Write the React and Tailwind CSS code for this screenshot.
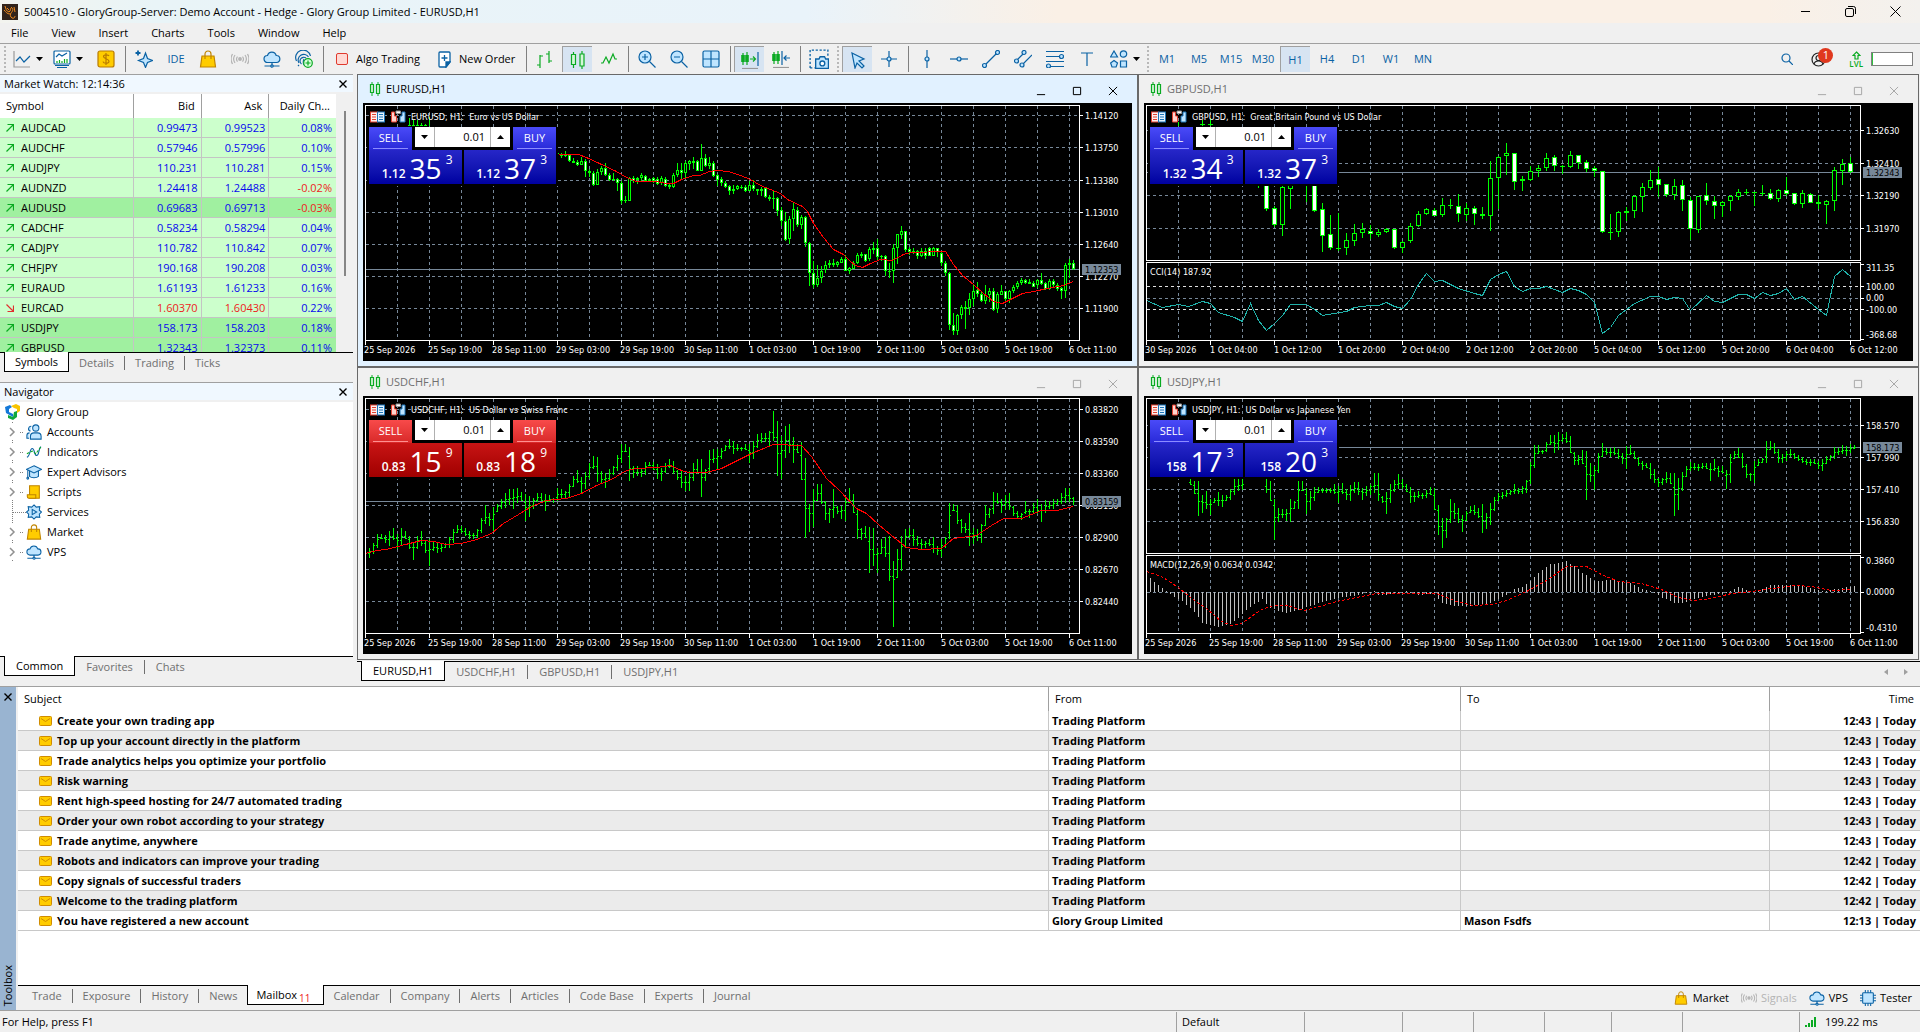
import React from 'react';

const BLUE = '#0b62a4';
const SKY = '#bfe5ff';
const GREEN = '#0aaa22';

/* ---------- data ---------- */

const MENU = ['File', 'View', 'Insert', 'Charts', 'Tools', 'Window', 'Help'];
const TIMEFRAMES = ['M1', 'M5', 'M15', 'M30', 'H1', 'H4', 'D1', 'W1', 'MN'];

const QUOTES = [
  { symbol: 'AUDCAD', bid: '0.99473', ask: '0.99523', change: '0.08%' },
  { symbol: 'AUDCHF', bid: '0.57946', ask: '0.57996', change: '0.10%' },
  { symbol: 'AUDJPY', bid: '110.231', ask: '110.281', change: '0.15%' },
  { symbol: 'AUDNZD', bid: '1.24418', ask: '1.24488', change: '-0.02%' },
  { symbol: 'AUDUSD', bid: '0.69683', ask: '0.69713', change: '-0.03%', hot: true },
  { symbol: 'CADCHF', bid: '0.58234', ask: '0.58294', change: '0.04%' },
  { symbol: 'CADJPY', bid: '110.782', ask: '110.842', change: '0.07%' },
  { symbol: 'CHFJPY', bid: '190.168', ask: '190.208', change: '0.03%' },
  { symbol: 'EURAUD', bid: '1.61193', ask: '1.61233', change: '0.16%' },
  { symbol: 'EURCAD', bid: '1.60370', ask: '1.60430', change: '0.22%', down: true },
  { symbol: 'USDJPY', bid: '158.173', ask: '158.203', change: '0.18%', hot: true },
  { symbol: 'GBPUSD', bid: '1.32343', ask: '1.32373', change: '0.11%', hot: true },
];

const MAILS = [
  ['Create your own trading app', 'Trading Platform', '', '12:43 | Today'],
  ['Top up your account directly in the platform', 'Trading Platform', '', '12:43 | Today'],
  ['Trade analytics helps you optimize your portfolio', 'Trading Platform', '', '12:43 | Today'],
  ['Risk warning', 'Trading Platform', '', '12:43 | Today'],
  ['Rent high-speed hosting for 24/7 automated trading', 'Trading Platform', '', '12:43 | Today'],
  ['Order your own robot according to your strategy', 'Trading Platform', '', '12:43 | Today'],
  ['Trade anytime, anywhere', 'Trading Platform', '', '12:43 | Today'],
  ['Robots and indicators can improve your trading', 'Trading Platform', '', '12:42 | Today'],
  ['Copy signals of successful traders', 'Trading Platform', '', '12:42 | Today'],
  ['Welcome to the trading platform', 'Trading Platform', '', '12:42 | Today'],
  ['You have registered a new account', 'Glory Group Limited', 'Mason Fsdfs', '12:13 | Today'],
];

// Series are kept in thirds of a pixel, top down. Candles: high, low, open, close.
const EURUSD = [
  [234,248,240,238],[236,252,246,240],[232,248,241,246],[240,264,243,262],[252,268,262,266],[258,276,264,272],[250,274,272,262],[256,310,261,290],
  [284,308,290,298],[290,335,296,332],[284,334,332,294],[276,304,294,282],[266,306,282,304],[296,320,303,317],[298,322,314,318],[312,350,315,326],
  [320,390,326,382],[366,386,378,382],[308,382,380,312],[306,328,312,320],[308,330,318,312],[298,320,312,304],[302,324,306,322],[312,324,314,320],
  [310,326,312,320],[308,334,314,330],[306,334,328,312],[308,340,314,336],[326,344,332,338],[298,342,338,304],[268,308,304,288],[266,316,288,298],
  [260,312,298,268],[258,288,270,262],[250,284,268,262],[258,292,262,290],[210,292,290,252],[240,280,252,276],[250,284,276,266],[260,310,266,305],
  [300,335,304,318],[310,336,316,328],[322,342,328,338],[334,362,336,350],[334,360,352,344],[332,348,344,336],[332,344,338,342],[334,354,338,350],
  [322,352,350,334],[318,350,334,346],[344,362,346,352],[340,366,352,344],[340,372,343,370],[362,380,370,375],[350,405,372,376],[368,425,373,410],
  [398,455,408,442],[415,500,442,497],[425,510,496,436],[388,470,436,406],[400,460,408,454],[424,466,454,428],[426,518,428,508],[505,636,508,598],
  [560,642,598,632],[574,640,632,612],[576,628,612,590],[562,598,588,574],[558,582,573,566],[554,580,566,574],[562,580,574,564],[550,568,566,554],
  [544,592,554,590],[580,600,590,583],[562,586,584,566],[538,570,566,544],[534,552,546,540],[540,564,541,560],[518,562,556,526],[504,540,528,522],
  [496,562,522,548],[542,562,546,550],[544,606,546,590],[566,612,590,593],[510,628,592,522],[480,570,522,481],[456,494,482,472],[470,534,472,527],
  [520,544,524,534],[522,540,536,530],[528,556,532,545],[522,550,545,530],[522,554,530,545],[518,546,521,545],[518,546,545,522],[522,550,523,535],
  [530,575,538,566],[562,606,566,598],[594,768,598,754],[716,782,754,770],[720,782,770,724],[694,734,724,700],[682,764,700,704],[658,724,702,676],
  [632,696,676,650],[624,670,648,660],[652,684,660,680],[632,690,680,664],[642,684,664,652],[642,712,652,707],[654,716,706,660],[634,664,662,650],
  [650,680,652,674],[648,686,674,652],[634,656,652,640],[622,644,640,628],[612,634,628,618],[616,630,619,626],[614,630,624,630],[620,640,628,638],
  [614,642,634,618],[598,632,618,630],[624,648,628,644],[614,648,644,620],[614,640,620,634],[626,652,632,644],[640,674,642,652],[566,672,652,574],
  [556,612,574,568],[558,588,568,586],
];

const EURUSD_MA = [
  [195,240],[215,241],[223,250],[236,268],[253,290],[263,310],[273,320],[293,322],[303,328],[310,328],[318,314],[330,304],[336,302],[346,292],
  [353,288],[365,290],[377,304],[387,316],[397,332],[417,358],[424,375],[439,396],[444,410],[450,448],[460,490],[470,524],[480,540],[487,562],
  [492,573],[499,578],[507,568],[517,556],[529,558],[540,540],[547,535],[582,532],[590,570],[599,604],[610,630],[620,656],[630,680],[639,688],
  [647,676],[659,658],[670,652],[684,642],[700,634],[710,620],
];

const GBPUSD = [
  [318,342,320,330],[330,410,330,404],[395,460,402,452],[336,486,452,340],[330,405,344,330],[300,330,320,310],[310,384,315,330],[330,413,330,410],
  [387,534,405,486],[423,528,481,523],[418,530,524,521],[477,543,523,499],[450,515,500,478],[447,492,478,466],[452,494,472,479],[466,490,482,475],
  [462,478,475,466],[464,526,466,523],[500,537,523,505],[447,508,502,457],[410,460,457,421],[402,424,421,406],[402,426,408,425],[372,428,424,394],
  [374,404,394,397],[360,444,397,419],[388,440,422,402],[396,453,402,421],[398,436,421,425],[262,470,425,311],[246,406,311,250],[207,302,247,238],
  [236,348,238,323],[305,350,322,314],[276,320,317,292],[272,308,290,283],[238,290,283,252],[244,290,250,276],[272,299,276,280],[231,282,278,244],
  [243,284,244,266],[258,294,265,284],[276,310,283,292],[291,476,292,475],[420,498,474,477],[412,490,475,415],[398,440,416,412],[364,432,412,367],
  [328,413,370,340],[288,348,343,319],[280,370,316,334],[330,368,331,364],[314,378,364,336],[318,410,334,379],[370,497,378,464],[366,476,467,367],
  [327,393,364,382],[366,435,382,395],[382,430,395,385],[364,411,382,367],[346,378,370,355],[344,362,353,358],[353,395,354,357],[334,365,356,359],
  [344,378,358,374],[346,384,376,349],[309,366,348,359],[356,394,358,391],[348,402,391,358],[357,388,361,386],[364,404,384,391],[378,450,392,382],
  [280,411,382,289],[256,333,290,270],[249,298,268,295],
];

const CCI = [
  [2,679],[18,700],[34,691],[44,695],[58,682],[66,687],[74,714],[90,730],[98,742],[106,686],[114,738],[122,767],[130,748],[138,722],[146,690],
  [162,690],[170,704],[178,724],[202,712],[210,700],[226,692],[234,692],[242,685],[250,697],[258,701],[266,676],[274,630],[282,598],[290,622],
  [298,619],[314,641],[330,658],[338,662],[346,616],[354,599],[362,591],[370,635],[378,650],[386,643],[394,643],[402,636],[418,653],[426,643],
  [434,649],[442,661],[450,683],[458,778],[466,760],[474,724],[490,688],[506,667],[514,667],[522,676],[530,670],[538,673],[546,707],[562,662],
  [570,682],[578,685],[594,661],[602,661],[610,671],[618,653],[626,662],[634,656],[642,641],[650,676],[658,667],[674,704],[682,724],[690,607],
  [698,586],[706,607],
];

// Bars: high, low
const USDCHF = [
  [545,575],[530,564],[505,545],[505,518],[508,530],[495,540],[486,522],[505,550],[487,540],[495,520],[510,550],[530,582],[510,548],[495,540],
  [525,560],[520,600],[525,556],[530,562],[535,558],[532,546],[513,545],[488,530],[478,500],[480,502],[487,510],[495,518],[500,518],[490,515],
  [457,500],[418,475],[440,480],[422,495],[415,438],[400,428],[382,425],[370,418],[370,430],[365,412],[378,405],[385,465],[390,452],[395,430],
  [380,408],[382,405],[385,435],[386,408],[395,410],[366,405],[370,395],[375,395],[354,392],[330,362],[312,350],[332,380],[318,370],[290,340],
  [270,308],[272,348],[315,350],[320,365],[308,345],[300,328],[268,316],[235,290],[234,258],[244,346],[300,336],[300,330],[305,334],[288,328],
  [288,300],[288,312],[295,338],[305,346],[290,320],[280,306],[285,325],[312,342],[315,365],[330,376],[315,376],[290,345],[278,325],[280,392],
  [308,346],[252,322],[250,290],[250,308],[245,280],[237,255],[219,250],[225,265],[235,254],[243,256],[235,252],[235,290],[225,280],[205,245],
  [202,230],[200,228],[195,240],[135,225],[165,330],[210,340],[180,275],[174,262],[213,290],[235,262],[228,342],[275,515],[415,498],[368,482],
  [354,405],[354,415],[404,462],[425,470],[370,455],[420,445],[420,458],[390,465],[366,412],[385,440],[430,520],[485,522],[480,515],[484,620],
  [486,600],[545,620],[518,565],[512,572],[510,645],[585,782],[550,635],[510,615],[490,545],[487,515],[490,540],[510,540],[520,548],[524,545],
  [520,540],[512,560],[540,568],[520,574],[512,545],[412,520],[415,435],[418,475],[460,500],[470,500],[440,540],[485,535],[490,525],[475,530],
  [418,480],[425,455],[378,445],[382,415],[400,440],[388,432],[380,432],[420,450],[435,460],[440,462],[405,445],[430,455],[410,440],[400,445],
  [415,468],[402,440],[405,430],[400,430],[400,418],[382,415],[366,410],[366,408],[392,418],
];

const USDCHF_MA = [
  [2,562],[13,551],[23,548],[38,536],[58,523],[70,526],[83,535],[98,532],[113,520],[128,500],[140,470],[155,445],[168,420],[183,403],[203,395],
  [218,380],[233,358],[248,338],[263,312],[273,306],[293,302],[307,298],[318,312],[325,319],[343,319],[358,306],[368,292],[388,262],[410,235],
  [438,236],[448,270],[463,335],[475,370],[493,425],[503,440],[515,475],[528,508],[543,542],[558,549],[578,546],[590,515],[613,507],[628,478],
  [640,457],[658,455],[678,432],[693,432],[710,421],
];

const USDJPY = [
  [339,358],[345,385],[345,449],[388,440],[375,430],[400,446],[395,410],[378,420],[388,424],[388,405],[370,403],[338,388],[338,375],[338,371],
  null,null,null,null,null,[340,380],[345,405],[400,522],[425,468],[430,455],[430,465],[398,468],[405,430],[345,428],[345,375],[365,445],[375,432],
  [362,405],[362,380],[366,380],[366,380],[366,380],[355,385],[360,410],[350,385],[368,403],[358,405],[348,380],[348,388],[365,402],[360,390],
  [355,388],[322,380],[322,406],[390,412],[378,444],[355,410],[342,378],[323,370],[340,368],[355,378],[362,412],[378,408],[374,395],[380,398],
  [372,395],[364,388],[366,432],[416,508],[455,546],[455,515],[400,470],[412,458],[425,470],[448,498],[435,465],[420,440],[418,448],[425,455],
  [415,500],[440,488],[410,478],[392,434],[380,405],[378,400],[372,394],[372,388],[355,385],[365,385],[360,384],[342,380],[288,355],[238,305],
  [238,265],[252,264],[228,258],[208,238],[208,260],[198,252],[205,228],[198,232],[210,262],[258,298],[268,298],[252,295],[255,402],[290,348],
  [300,372],[260,320],[232,272],[245,268],[245,274],[242,268],[248,280],[260,294],[240,310],[238,268],[255,280],[272,300],[285,312],[290,305],
  [290,340],[310,352],[335,362],[335,358],[318,350],[320,354],[322,450],[335,432],[318,375],[300,332],[288,315],[292,312],[295,315],[292,308],
  [290,308],[292,345],[280,315],[300,332],[300,322],[312,370],[265,350],[255,280],[245,275],[262,305],[295,335],[320,345],[285,350],[280,300],
  [275,292],[225,290],[225,252],[230,265],[250,292],[265,292],[255,285],[248,272],[260,280],[268,285],[272,290],[278,298],[280,300],[278,295],
  [285,310],[280,314],[270,295],[268,284],[242,280],[245,268],[236,265],[240,270],[235,262],[238,250],
];

const MACD = [
  [6,637],[14,656],[22,675],[26,685],[38,705],[50,738],[58,770],[74,783],[86,775],[94,755],[106,722],[118,700],[126,725],[142,742],[154,733],
  [166,720],[178,708],[194,695],[210,690],[230,676],[234,688],[250,684],[262,676],[274,686],[290,684],[298,712],[306,718],[322,720],[346,712],
  [362,688],[370,668],[378,662],[386,645],[394,620],[406,595],[422,585],[430,600],[438,620],[450,645],[470,642],[486,652],[498,668],[510,680],
  [518,695],[530,710],[538,710],[550,700],[562,690],[582,682],[594,664],[606,674],[614,674],[626,658],[642,656],[658,660],[678,676],[690,670],
  [702,664],[710,660],
];

const MACD_SIGNAL = [
  [2,616],[17,630],[34,664],[47,695],[62,725],[77,765],[87,776],[97,770],[117,730],[129,716],[142,718],[159,731],[172,724],[192,706],[212,692],
  [232,682],[262,682],[292,682],[312,704],[329,716],[347,715],[362,702],[382,676],[402,642],[422,600],[442,600],[457,625],[474,646],[497,650],
  [517,670],[534,692],[549,702],[567,695],[587,682],[607,676],[627,666],[652,657],[667,659],[687,671],[707,668],
];

const DATES_H1 = [
  '25 Sep 2026', '25 Sep 19:00', '28 Sep 11:00', '29 Sep 03:00', '29 Sep 19:00', '30 Sep 11:00',
  '1 Oct 03:00', '1 Oct 19:00', '2 Oct 11:00', '5 Oct 03:00', '5 Oct 19:00', '6 Oct 11:00',
];
const DATES_GBP = [
  '30 Sep 2026', '1 Oct 04:00', '1 Oct 12:00', '1 Oct 20:00', '2 Oct 04:00', '2 Oct 12:00',
  '2 Oct 20:00', '5 Oct 04:00', '5 Oct 12:00', '5 Oct 20:00', '6 Oct 04:00', '6 Oct 12:00',
];

/* ---------- chart parts ---------- */

const px = (v, off) => Math.round(v / 3 - off);

const Candles = ({ data, start, step, off }) => {
  const half = step === 8 ? 2 : 1;
  return data.map(([h, l, o, c], i) => {
    const x = 2 + (start + i) * step;
    const top = px(Math.min(o, c), off);
    const height = Math.max(px(Math.max(o, c), off) - top, 1);
    return (
      <g key={i}>
        <rect x={x} y={px(h, off)} width="1" height={px(l, off) - px(h, off)} fill="#00ff00" />
        <rect x={x - half} y={top} width={half * 2 + 1} height={height} fill="#00ff00" />
        {height > 2 && (
          <rect x={x - half + 1} y={top + 1} width={half * 2 - 1} height={height - 2} fill={c > o ? '#ffffff' : '#000000'} />
        )}
      </g>
    );
  });
};

const Bars = ({ data, start, off }) => {
  const mid = (bar) => (bar[0] + bar[1]) / 2;
  return data.map((bar, i) => {
    if (!bar) return null;
    const [h, l] = bar;
    const clamp = (v) => Math.min(Math.max(v, h + 3), l - 3);
    const x = 2 + (start + i) * 4;
    const prev = data[i - 1] || bar;
    const next = data[i + 1] || bar;
    const open = clamp((mid(prev) + mid(bar)) / 2);
    const close = clamp((mid(next) + mid(bar)) / 2);
    return (
      <g key={i} fill="#00ff00">
        <rect x={x} y={px(h, off)} width="1" height={px(l, off) - px(h, off)} />
        <rect x={x - 1} y={px(open, off)} width="1" height="1" />
        <rect x={x + 1} y={px(close, off)} width="1" height="1" />
      </g>
    );
  });
};

const Line = ({ data, off, ...rest }) => (
  <polyline points={data.map(([x, y]) => `${x + 0.5},${px(y, off) + 0.5}`).join(' ')} fill="none" {...rest} />
);

const Histogram = ({ data, off }) => {
  const bars = [];
  for (let x = 6; x <= 710; x += 4) {
    const n = Math.max(data.findIndex((p) => p[0] >= x), 1);
    const [x0, y0] = data[n - 1];
    const [x1, y1] = data[n];
    bars.push([x, px(y0 + ((y1 - y0) * (x - x0)) / (x1 - x0), off)]);
  }
  return bars.map(([x, y]) => (
    <rect key={x} x={x} y={Math.min(y, 196)} width="1" height={Math.max(Math.abs(y - 196), 1)} fill="#c0c0c0" />
  ));
};

const Plot = ({ id, title, grid, prices, price, priceY, dates, split, children, sub, subTitle, subLabels }) => {
  const columns = Array.from({ length: 22 }, (_, i) => 34.5 + i * 32);
  const bottom = split ? 157.5 : 237.5;
  return (
    <svg
      viewBox="0 0 769 258"
      className="block h-auto w-full bg-black font-['DejaVu_Sans_Condensed','DejaVu_Sans','Open_Sans',sans-serif] text-[9px]"
      role="img"
      aria-label={title}
    >
      <clipPath id={`clip-${id}`}>
        <rect x="3" y="3" width="713" height="234" />
      </clipPath>
      <g shapeRendering="crispEdges">
        <g stroke="#778899" strokeDasharray="3 3">
          {columns.map((x) => (
            <path key={x} d={split ? `M${x} 3V157M${x} 160V237` : `M${x} 3V237`} />
          ))}
          {grid.map((y) => (
            <path key={y} d={`M3 ${y + 0.5}H716`} />
          ))}
        </g>
        <path d={`M3 ${priceY + 0.5}H716`} stroke="#778899" />
        <g clipPath={`url(#clip-${id})`}>
          {children}
          {sub}
        </g>
        <g fill="none" stroke="#ffffff">
          <path d={`M2.5 2.5H716.5V${bottom}H2.5Z`} />
          {split && <path d="M2.5 159.5H716.5V237.5H2.5Z" />}
          {grid.map((y) => (
            <path key={y} d={`M717 ${y + 0.5}h3`} />
          ))}
          {dates.map((d, i) => (
            <path key={d} d={`M${2.5 + i * 64} 238v4`} />
          ))}
          {(subLabels || []).map(([label, , tick]) => (
            <path key={label} d={`M717 ${tick + 0.5}h3`} />
          ))}
        </g>
      </g>
      <g fill="#ffffff">
        <text x="48" y="17" className="whitespace-pre">{title}</text>
        {grid.map((y, i) => (
          <text key={y} x="722" y={y + 4}>{prices[i]}</text>
        ))}
        {dates.map((d, i) => (
          <text key={d} x={1 + i * 64 + (i && d[1] === ' ' ? 1 : 0)} y="250">{d}</text>
        ))}
        {split && <text x="6" y="172">{subTitle}</text>}
        {(subLabels || []).map(([label, y]) => (
          <text key={label} x="722" y={y}>{label}</text>
        ))}
      </g>
      <rect x="719" y={priceY - 5} width="39" height="11" fill="#778899" />
      <text x="722" y={priceY + 4} fill="#000000">{price}</text>
      <PanelIcons />
    </svg>
  );
};

const PanelIcons = () => (
  <g>
    <rect x="7.5" y="9" width="7" height="10" fill="#fff0ee" stroke="#e04030" />
    <rect x="14.5" y="9" width="7" height="10" fill="#e4f4ff" stroke="#1c74b8" />
    <path d="M9 11.500h4M9 14h4M9 16.500h4" stroke="#e04030" />
    <path d="M16 11.500h4M16 14h4M16 16.500h4" stroke="#1c74b8" />
    <path d="M28.500 9h3v4h2v6h-5z" fill="#ffd5cf" stroke="#e04030" />
    <path d="M42 9h-3v4h-2v6h5z" fill="#bfe5ff" stroke="#1c74b8" />
    <path d="M33 8h4.500v2.500H33z" fill="#ffffff" stroke="#999999" />
  </g>
);

const ChartWindow = ({ name, active, sell, buy, red, children }) => {
  const main = red ? 'from-[#c81414] to-[#a00000]' : 'from-[#2626c8] to-[#0000a0]';
  const tab = red ? 'from-[#f84a4a] to-[#d82828]' : 'from-[#4a4af8] to-[#2828d8]';
  const rule = red ? 'border-[#ff9090]' : 'border-[#8c8cff]';
  return (
    <section className={`border border-[#696969] px-[5px] pb-[5px] ${active ? 'bg-[#e1f1ff]' : 'bg-[#f0f0f0]'}`}>
      <header className="flex h-7 items-center pl-1.5">
        <CandleIcon />
        <h2 className={`ml-[5px] flex-1 ${active ? 'text-black' : 'text-[#6f6f6f]'}`}>{name}</h2>
        <WindowButtons active={active} />
      </header>
      <div className="relative">
        {children}
        <div className="absolute left-1 top-6 bg-black p-0.5 pt-0 text-white">
          <div className="flex h-[23px] w-[187px] justify-between">
            <button className={`flex h-[23px] w-[43px] justify-center bg-gradient-to-b px-1 ${tab}`}>
              <span className={`flex h-[22px] w-full items-center justify-center border-b ${rule}`}>SELL</span>
            </button>
            <div className="flex h-5 w-[95px] bg-white text-black">
              <button aria-label="Decrease volume" className="flex w-5 items-center justify-center border-r border-[#b0b0b0]">
                <Caret />
              </button>
              <input aria-label={`${name} volume`} defaultValue="0.01" className="w-0 flex-1 pr-[5px] text-right outline-none" />
              <button aria-label="Increase volume" className="flex w-5 items-center justify-center border-l border-[#b0b0b0]">
                <Caret up />
              </button>
            </div>
            <button className={`flex h-[23px] w-[43px] justify-center bg-gradient-to-b px-1 ${tab}`}>
              <span className={`flex h-[22px] w-full items-center justify-center border-b ${rule}`}>BUY</span>
            </button>
          </div>
          <div className="flex h-[34px] gap-0.5">
            {[sell, buy].map(([base, big, pip]) => (
              <div key={big} className={`flex flex-1 items-end justify-end bg-gradient-to-b pb-0.5 pr-[9px] ${main}`}>
                <span className="text-xs font-semibold leading-4">{base}</span>
                <span className="ml-1 text-[28px] leading-7">{big}</span>
                <span className="ml-1 self-start pt-0.5 text-xs leading-4">{pip}</span>
              </div>
            ))}
          </div>
        </div>
      </div>
    </section>
  );
};

/* ---------- icons ---------- */

const Icon = ({ size = 18, children, ...rest }) => (
  <svg width={size} height={size} viewBox="0 0 18 18" fill="none" stroke={BLUE} strokeWidth="1.2" aria-hidden="true" className="shrink-0" {...rest}>
    {children}
  </svg>
);

const Caret = ({ up }) => (
  <svg width="7" height="4" viewBox="0 0 7 4" aria-hidden="true" className="shrink-0">
    <path d={up ? 'M0 4h7L3.500 0z' : 'M0 0h7L3.500 4z'} fill="#000000" />
  </svg>
);

const CandleIcon = () => (
  <svg width="12" height="14" viewBox="0 0 12 14" fill="#d4f7d8" stroke={GREEN} aria-hidden="true">
    <path d="M3 0v14M9 0v14" />
    <path d="M1.500 2.500h3v8h-3zM7.500 2.500h3v9h-3z" strokeWidth="1.200" />
  </svg>
);

const WindowButtons = ({ active }) => (
  <div className={`flex items-center gap-[26px] pr-3.5 pt-1 ${active ? 'text-black' : 'text-[#a8a8a8]'}`}>
    {[
      ['Minimize', 'M1 9.500h9'],
      ['Maximize', 'M1.500 1.500h8v8h-8z'],
      ['Close', 'M1 1l9 9M10 1l-9 9'],
    ].map(([label, d]) => (
      <button key={label} aria-label={label}>
        <svg width="10" height="10" viewBox="0 0 11 11" fill="none" stroke="currentColor" strokeWidth="1.100"><path d={d} /></svg>
      </button>
    ))}
  </div>
);

const CloseIcon = () => (
  <svg width="8" height="8" viewBox="0 0 8 8" stroke="#000000" strokeWidth="1.400" aria-hidden="true">
    <path d="M0.500 0.500l7 7M7.500 0.500l-7 7" />
  </svg>
);

const LineChartIcon = () => (
  <Icon><path d="M1 1v16h16" stroke="#9a9a9a" /><path d="M3 11l4-4 4 5 6-6" /></Icon>
);
const IndicatorWindowIcon = () => (
  <Icon>
    <rect x="1" y="1" width="16" height="13" rx="1" fill="#fff" />
    <path d="M3 7l3-3 3 2 5-3" />
    <path d="M4 13v-2M6.500 13v-3M9 13v-2M11.500 13V9M14 13v-4" stroke={GREEN} />
    <path d="M2 15.500h14M4 17.500h10" />
  </Icon>
);
const DollarIcon = () => (
  <Icon stroke="#b87a00">
    <rect x="1" y="1" width="16" height="16" rx="2" fill="#ffcc00" />
    <path d="M12 6c-.5-1.500-5.500-1.800-5.500.6S12 8.500 12 11.300s-5.500 2.300-6 .3M9 3v12" />
  </Icon>
);
const StarIcon = () => (
  <Icon>
    <path d="M10.500 3l2 5.500 5 2-5 2-2 5-2-5-5-2 5-2z" fill={SKY} />
    <path d="M3 .5v5M.5 3h5" strokeWidth="1.800" />
  </Icon>
);
const BagIcon = ({ size }) => (
  <Icon size={size} stroke="#c08400">
    <path d="M3 6h12l1.500 11h-15z" fill="#ffcc00" />
    <path d="M6 9V4a3 3 0 0 1 6 0v5" />
  </Icon>
);
const SignalIcon = ({ size }) => (
  <Icon size={size} stroke="#b4b4b4">
    <circle cx="9" cy="9" r="1.300" fill="#b4b4b4" />
    <path d="M6.500 6.500a4 4 0 0 0 0 5M11.500 6.500a4 4 0 0 1 0 5M4 5a7 7 0 0 0 0 8M14 5a7 7 0 0 1 0 8M1.500 4a10 10 0 0 0 0 10M16.500 4a10 10 0 0 1 0 10" />
  </Icon>
);
const CloudIcon = ({ size }) => (
  <Icon size={size}>
    <path d="M4.500 12.500a3.500 3.500 0 0 1 0-7 4.500 4.500 0 0 1 8.700 0 3.500 3.500 0 0 1 .3 7z" fill={SKY} />
    <path d="M9 12.500v3M1.500 16h15" />
    <circle cx="9" cy="16" r="1.200" fill={SKY} />
  </Icon>
);
const CommunityIcon = () => (
  <Icon>
    <path d="M1.500 11a7.500 7.500 0 1 1 14-5M4 13a5.200 5.200 0 1 1 9.500-6M6.500 14a3 3 0 1 1 4.500-6M9 9c-1 2-1 4 0 6M3 15l1 1" />
    <circle cx="13" cy="13" r="4.300" fill="#d9ffdd" stroke={GREEN} />
    <path d="M13 10.500v5M10.500 13h5" stroke={GREEN} />
  </Icon>
);
const NewOrderIcon = () => (
  <svg width="13" height="17" viewBox="0 0 13 17" fill="#fff" stroke={BLUE} strokeWidth="1.300" aria-hidden="true">
    <path d="M1 2a1 1 0 0 1 1-1h9a1 1 0 0 1 1 1v9l-4 5H2a1 1 0 0 1-1-1z" />
    <path d="M8 16v-5h4z" fill={BLUE} />
    <path d="M6.500 4v6M3.500 7h6" />
  </svg>
);
const BarsIcon = () => (
  <Icon stroke={GREEN}><path d="M4 5v13M1 15h3M4 6h3M13 1v12M10 4h3M13 11h3" /></Icon>
);
const CandlesIcon = () => (
  <Icon stroke={GREEN} fill="#d4f7d8"><path d="M4.500 1v16M13 0v18" /><path d="M2.500 3.500h4v10h-4zM11 3h4v12h-4z" /></Icon>
);
const ZigzagIcon = () => (
  <Icon stroke={GREEN}><path d="M1 13h2l3-6 3 6 4-9 2 5h2" /></Icon>
);
const ZoomIcon = ({ plus }) => (
  <Icon>
    <circle cx="7" cy="7" r="6" fill={SKY} />
    <path d={plus ? 'M4 7h6M7 4v6M11.500 11.500l6 6' : 'M4 7h6M11.500 11.500l6 6'} />
  </Icon>
);
const TileIcon = () => (
  <Icon><rect x="1" y="1" width="16" height="16" rx="1.500" fill={SKY} /><path d="M9 1v16M1 9h16" /></Icon>
);
const AutoScrollIcon = () => (
  <Icon stroke={GREEN}>
    <path d="M2 2v12M6 1v13M.8 4.500h2.400v6H.8zM4.800 4.500h2.400v6H4.800zM9 8h5M12 5.500L14.500 8 12 10.500" />
    <path d="M17 1v14" stroke={BLUE} /><path d="M1 17.500h16" stroke="#999" />
  </Icon>
);
const ChartShiftIcon = () => (
  <Icon stroke={GREEN}>
    <path d="M2 2v12M6 1v13M.8 4.500h2.400v6H.8zM4.800 4.500h2.400v6H4.800z" />
    <path d="M10 1v14M12 8h6M14.500 5.500L12 8l2.500 2.500" stroke={BLUE} /><path d="M1 17.500h16" stroke="#999" />
  </Icon>
);
const CameraIcon = () => (
  <Icon size={20}>
    <path d="M1 17V1h16v5M1 17h4" strokeDasharray="2 1.500" />
    <path d="M6 9h3l1-2h4l1 2h2.500v8.500H6z" fill={SKY} />
    <circle cx="12" cy="13" r="2.200" fill="#fff" />
  </Icon>
);
const CursorIcon = () => (
  <Icon><path d="M3 2l12 6-5 2 5 5-2 2-5-5-2 5z" fill={SKY} /></Icon>
);
const CrosshairIcon = () => (
  <Icon><path d="M9 1v16M1 9h16" /><circle cx="9" cy="9" r="2" fill={SKY} /></Icon>
);
const VLineIcon = () => (
  <Icon><path d="M9 0v18" /><circle cx="9" cy="9" r="2" fill={SKY} /></Icon>
);
const HLineIcon = () => (
  <Icon><path d="M0 9h18" /><circle cx="9" cy="9" r="2" fill={SKY} /></Icon>
);
const TrendIcon = () => (
  <Icon><path d="M3 15L15 3" /><circle cx="2.500" cy="15.500" r="2" fill={SKY} /><circle cx="15.500" cy="2.500" r="2" fill={SKY} /></Icon>
);
const ChannelIcon = () => (
  <Icon><path d="M3 10l7-7M8 15l10-10" /><circle cx="2.500" cy="11" r="2" fill={SKY} /><circle cx="10" cy="2.500" r="2" fill={SKY} /><circle cx="8" cy="15" r="2" fill={SKY} /></Icon>
);
const FiboIcon = () => (
  <Icon><path d="M0 1.500h18M0 6.500h15M0 11.500h18M3 16.500h15" /><circle cx="15.500" cy="6.500" r="2" fill={SKY} /><circle cx="2.500" cy="16" r="2" fill={SKY} /></Icon>
);
const TextIcon = () => (
  <Icon><path d="M3 3h12M9 3v13" /></Icon>
);
const ShapesIcon = () => (
  <Icon fill={SKY}>
    <path d="M4 1l3.500 6h-7zM4 10.500l3.500 2.500-1.400 4H2L.6 13z" />
    <circle cx="13.500" cy="4" r="3.200" /><path d="M10.500 11h6v6h-6z" />
  </Icon>
);
const ChipIcon = () => (
  <Icon size={16}>
    <path d="M6 0v18M9 0v18M12 0v18M0 6h18M0 9h18M0 12h18" />
    <rect x="3" y="3" width="12" height="12" rx="1" fill={SKY} />
  </Icon>
);
const MailIcon = () => (
  <svg width="13" height="10" viewBox="0 0 13 10" fill="#ffcc00" stroke="#d08c00" aria-hidden="true">
    <rect x=".5" y=".5" width="12" height="9" rx="1" />
    <path d="M2 2.500l4.500 3 4.500-3" fill="none" />
  </svg>
);

const NAV = [
  ['Accounts', <Icon key="i" size={16} fill={SKY}><circle cx="11" cy="4.500" r="3.500" /><path d="M5 17v-3a4 4 0 0 1 4-4h4a4 4 0 0 1 4 4v3zM3.500 16H1v-3a3 3 0 0 1 3-3M6 2.500a2.800 2.800 0 0 0-1 5.500" /></Icon>],
  ['Indicators', <Icon key="i" size={16}><path d="M1 15c4-1 3-10 6-10s2 8 5 8 2-9 5-10" /><path d="M1 11l6-3 4 3 6-8" stroke={GREEN} strokeDasharray="3 1.500" /></Icon>],
  ['Expert Advisors', <Icon key="i" size={16} fill={SKY}><path d="M4 8v6c2 2 8 2 10 0V8" /><path d="M9 2l8.500 4L9 10 .5 6z" /><path d="M2 7v8" /><circle cx="2" cy="16" r="1" /></Icon>],
  ['Scripts', <Icon key="i" size={16} stroke="#c08400" fill="#ffcc00"><path d="M4 2h11v14H4z" /><path d="M1.500 12H11v4H3a2 2 0 0 1-1.500-2z" /></Icon>],
  ['Services', <Icon key="i" size={16} fill={SKY}><path d="M9 1l2.500 2.500 4-.5-.5 4L17.500 9 15 11.500l.5 3.500-4-.5L9 17l-2.500-2.500-4 .5.5-3.500L.5 9 3 7l-.5-4 4 .5z" /><path d="M7 6l5 3-5 3z" /></Icon>],
  ['Market', <BagIcon key="i" size={16} />],
  ['VPS', <CloudIcon key="i" size={16} />],
];

/* ---------- layout parts ---------- */

const Separator = () => (
  <div className="flex w-1.5 shrink-0 justify-center self-stretch py-0.5"><div className="w-px bg-[#808080]" /></div>
);
const Grip = () => (
  <div className="flex w-1.5 shrink-0 justify-center self-stretch py-0.5"><div className="border-l-2 border-dotted border-[#b8b8b8]" /></div>
);

const ToolButton = ({ label, pressed, children }) => (
  <button
    aria-label={label}
    className={`mx-px flex h-[26px] w-[30px] shrink-0 items-center justify-center ${pressed ? 'border-l border-t border-[#a0a0a0] bg-[#d7e4f2]' : ''}`}
  >
    {children}
  </button>
);

const Tabs = ({ items, active, badge, pad = 'px-2.5' }) => (
  <div role="tablist" className="flex pl-1">
    {items.map((item, i) =>
      item === active ? (
        <button key={item} role="tab" aria-selected="true" className={`-mt-px flex h-5 items-center border border-t-0 border-black bg-white ${badge ? 'px-2' : pad}`}>
          {item}
          {badge && <span className="self-end pl-0.5 pr-1 text-[10px] leading-3 text-[#ee1c1c]">{badge}</span>}
        </button>
      ) : (
        <button key={item} role="tab" aria-selected="false" className="flex h-[19px] items-center text-[#6f6f6f]">
          <span className={pad}>{item}</span>
          {i < items.length - 1 && items[i + 1] !== active && <span className="h-3.5 w-px bg-[#6f6f6f]" />}
        </button>
      )
    )}
  </div>
);

const PanelHeader = ({ children }) => (
  <header className="mb-0.5 flex h-[18px] items-center justify-between border-t border-[#a0a0a0] bg-[#f0f8ff] pl-1 pr-1.5">
    <h2>{children}</h2>
    <button aria-label="Close panel"><CloseIcon /></button>
  </header>
);

const MarketWatch = () => (
  <section>
    <PanelHeader>Market Watch: 12:14:36</PanelHeader>
    <div className="flex h-[259px] overflow-hidden border-b border-black">
      <table className="w-[336px] table-fixed border-separate border-spacing-0 self-start">
        <thead>
          <tr className="h-6 bg-white">
            <th className="w-[133px] pl-1.5 text-left font-normal">Symbol</th>
            {['Bid', 'Ask', 'Daily Ch...'].map((h) => (
              <th key={h} className="border-l border-[#a0a0a0] pr-1.5 text-right font-normal">{h}</th>
            ))}
          </tr>
        </thead>
        <tbody>
          {QUOTES.map((q) => {
            const tone = q.down ? 'text-[#ee1c1c]' : 'text-[#0808ee]';
            return (
              <tr key={q.symbol} className={q.hot ? 'bg-[#a0f0a0]' : 'bg-[#ccffcc]'}>
                <td className="h-5 border-b border-[#c4c4c4] pl-1.5">
                  <span className="flex items-center gap-[7px]">
                    <svg width="8" height="8" viewBox="0 0 8 8" fill="none" stroke={q.down ? '#e03030' : GREEN} strokeWidth="1.200" aria-hidden="true">
                      <path d={q.down ? 'M.5 .5l7 7M7.500 1.500v6h-6' : 'M.5 7.500l7-7M1.500 .5h6v6'} />
                    </svg>
                    {q.symbol}
                  </span>
                </td>
                <td className={`h-5 border-b border-l border-[#c4c4c4] pr-[3px] text-right ${tone}`}>{q.bid}</td>
                <td className={`h-5 border-b border-l border-[#c4c4c4] pr-[3px] text-right ${tone}`}>{q.ask}</td>
                <td className={`h-5 border-b border-l border-[#c4c4c4] pr-1 text-right ${q.change[0] === '-' ? 'text-[#ee1c1c]' : 'text-[#0808ee]'}`}>{q.change}</td>
              </tr>
            );
          })}
        </tbody>
      </table>
      <div className="flex flex-1 justify-center pt-[17px]"><div className="h-[165px] w-0.5 bg-[#868686]" /></div>
    </div>
    <div className="h-[29px]">
      <Tabs items={['Symbols', 'Details', 'Trading', 'Ticks']} active="Symbols" />
    </div>
  </section>
);

const Navigator = () => (
  <section className="flex flex-1 flex-col">
    <PanelHeader>Navigator</PanelHeader>
    <div className="flex-1 border-b border-black bg-white">
      <div className="flex h-5 items-center gap-1.5 pl-[5px]">
        <svg width="15" height="16" viewBox="0 0 15 16" aria-hidden="true">
          <path d="M0 3l5-2 2 2-3 2v3l4 2v3L1 9z" fill="#1478d8" />
          <path d="M6 2l5-2 4 2v5l-3 2V5L9 4z" fill="#f8c400" />
          <path d="M9 8l3-1v6l-4 3-5-2v-3l5 2z" fill="#12a83c" />
        </svg>
        Glory Group
      </div>
      <ul>
        {NAV.map(([label, icon]) => (
          <li key={label} className="flex h-5 items-center pl-2">
            <svg width="18" height="20" viewBox="0 0 18 20" fill="none" aria-hidden="true">
              {label === 'Services' ? (
                <path d="M4.500 0v20M5 10.500h13" stroke="#808080" strokeDasharray="1 1" />
              ) : (
                <>
                  <path d="M4.500 0v2M4.500 18v2M12 10.500h4" stroke="#808080" strokeDasharray="1 1" />
                  <path d="M2 6l4 4-4 4" stroke="#909090" strokeWidth="1.500" />
                </>
              )}
            </svg>
            {icon}
            <span className="ml-[5px]">{label}</span>
          </li>
        ))}
      </ul>
    </div>
    <div className="h-[29px]">
      <Tabs items={['Common', 'Favorites', 'Chats']} active="Common" pad="px-[11px]" />
    </div>
  </section>
);

const Toolbar = () => (
  <div className="flex h-[31px] items-center border-t border-[#a0a0a0] pl-0.5 text-[#0b62a4]">
    <Grip />
    <button aria-label="Chart type" className="flex w-10 items-center gap-[5px] pl-[5px]"><LineChartIcon /><Caret /></button>
    <button aria-label="Indicators" className="flex w-[42px] items-center gap-[5px] pl-[5px]"><IndicatorWindowIcon /><Caret /></button>
    <ToolButton label="Symbols"><DollarIcon /></ToolButton>
    <Separator />
    <ToolButton label="AI assistant"><StarIcon /></ToolButton>
    <ToolButton>IDE</ToolButton>
    <ToolButton label="Market"><BagIcon /></ToolButton>
    <ToolButton label="Signals"><SignalIcon /></ToolButton>
    <ToolButton label="VPS"><CloudIcon /></ToolButton>
    <ToolButton label="Community"><CommunityIcon /></ToolButton>
    <Separator />
    <button className="flex w-[103px] items-center gap-2 pl-2.5 text-black">
      <span className="h-3 w-3 rounded-xs border border-[#e03a2e] bg-[#ffd9d4]" />
      Algo Trading
    </button>
    <button className="flex w-[94px] items-center gap-2 pl-[9px] text-black"><NewOrderIcon />New Order</button>
    <Separator />
    <ToolButton label="Bar chart"><BarsIcon /></ToolButton>
    <ToolButton label="Candlesticks" pressed><CandlesIcon /></ToolButton>
    <ToolButton label="Line chart"><ZigzagIcon /></ToolButton>
    <Separator />
    <ToolButton label="Zoom in"><ZoomIcon plus /></ToolButton>
    <ToolButton label="Zoom out"><ZoomIcon /></ToolButton>
    <ToolButton label="Tile windows"><TileIcon /></ToolButton>
    <Separator />
    <ToolButton label="Auto scroll" pressed><AutoScrollIcon /></ToolButton>
    <ToolButton label="Chart shift"><ChartShiftIcon /></ToolButton>
    <Separator />
    <ToolButton label="Screenshot"><CameraIcon /></ToolButton>
    <Grip />
    <ToolButton label="Cursor" pressed><CursorIcon /></ToolButton>
    <ToolButton label="Crosshair"><CrosshairIcon /></ToolButton>
    <Separator />
    <ToolButton label="Vertical line"><VLineIcon /></ToolButton>
    <ToolButton label="Horizontal line"><HLineIcon /></ToolButton>
    <ToolButton label="Trendline"><TrendIcon /></ToolButton>
    <ToolButton label="Channel"><ChannelIcon /></ToolButton>
    <ToolButton label="Fibonacci"><FiboIcon /></ToolButton>
    <ToolButton label="Text"><TextIcon /></ToolButton>
    <button aria-label="Objects" className="flex w-[42px] items-center gap-[5px] pl-[7px]"><ShapesIcon /><Caret /></button>
    <Grip />
    {TIMEFRAMES.map((tf) => (
      <ToolButton key={tf} pressed={tf === 'H1'}>{tf}</ToolButton>
    ))}
    <div className="ml-auto flex items-center pr-[7px]">
      <button aria-label="Search" className="mr-[18px]">
        <svg width="12" height="12" viewBox="0 0 12 12" fill="none" stroke={BLUE} strokeWidth="1.200"><circle cx="5" cy="5" r="4" /><path d="M8 8l4 4" /></svg>
      </button>
      <button aria-label="Account" className="relative mr-4 w-[22px]">
        <svg width="15" height="15" viewBox="0 0 15 15" fill="none" stroke="#222" strokeWidth="1.200"><circle cx="7.500" cy="7.500" r="6.500" /><circle cx="7.500" cy="6" r="2.500" /><path d="M3 12c1-4 8-4 9 0" /></svg>
        <span className="absolute -top-1 right-0 flex h-[15px] w-[15px] items-center justify-center rounded-full bg-[#e0381e] text-white">1</span>
      </button>
      <div className="mr-2 flex flex-col items-center text-[8px] font-semibold leading-2 text-[#0aaa22]">
        <svg width="9" height="9" viewBox="0 0 9 9" fill="none" stroke={GREEN} strokeWidth="1.200" aria-hidden="true"><path d="M4.500 1L8 4.500H6V8H3V4.500H1z" /></svg>
        LVL
      </div>
      <div className="h-3.5 w-[42px] border border-[#808080] bg-white"><div className="h-full w-px bg-[#30c040]" /></div>
    </div>
  </div>
);

const Toolbox = () => (
  <section className="flex flex-1 border-t border-[#a0a0a0]">
    <div className="mr-0.5 flex w-4 flex-col items-center justify-between bg-[#99b4d1] pb-1 pt-1.5">
      <button aria-label="Close toolbox"><CloseIcon /></button>
      <h2 className="rotate-180 leading-4 [writing-mode:vertical-rl]">Toolbox</h2>
    </div>
    <div className="flex flex-1 flex-col">
      <div className="flex-1 border-b border-black bg-white">
        <table className="w-full table-fixed border-separate border-spacing-0">
          <thead>
            <tr className="h-6 text-left">
              <th className="pl-1.5 font-normal">Subject</th>
              <th className="w-[412px] border-l border-[#a0a0a0] pl-1.5 font-normal">From</th>
              <th className="w-[309px] border-l border-[#a0a0a0] pl-1.5 font-normal">To</th>
              <th className="w-[151px] border-l border-[#a0a0a0] pr-1.5 text-right font-normal">Time</th>
            </tr>
          </thead>
          <tbody className="font-bold">
            {MAILS.map(([subject, from, to, time], i) => (
              <tr key={subject} className={i % 2 ? 'bg-[#ebebeb]' : 'bg-white'}>
                <td className="h-5 border-b border-[#c8c8c8] pl-[21px]">
                  <span className="flex items-center gap-[5px]"><MailIcon />{subject}</span>
                </td>
                <td className="h-5 border-b border-l border-[#c8c8c8] pl-[3px]">{from}</td>
                <td className="h-5 border-b border-l border-[#c8c8c8] pl-[3px]">{to}</td>
                <td className="h-5 border-b border-l border-[#c8c8c8] pr-1 text-right">{time}</td>
              </tr>
            ))}
          </tbody>
        </table>
      </div>
      <div className="flex h-6 justify-between">
        <Tabs
          items={['Trade', 'Exposure', 'History', 'News', 'Mailbox', 'Calendar', 'Company', 'Alerts', 'Articles', 'Code Base', 'Experts', 'Journal']}
          active="Mailbox"
          badge="11"
        />
        <div className="flex items-center gap-3 pr-2">
          <button className="flex items-center gap-[5px]"><BagIcon size={14} />Market</button>
          <button className="flex items-center gap-1 text-[#b4b4b4]"><SignalIcon size={16} />Signals</button>
          <button className="flex items-center gap-1"><CloudIcon size={16} />VPS</button>
          <button className="flex items-center gap-1"><ChipIcon />Tester</button>
        </div>
      </div>
    </div>
  </section>
);

const StatusBar = () => (
  <footer className="flex h-[22px] items-center border-t border-[#a0a0a0]">
    <div className="flex-1 pl-0.5">For Help, press F1</div>
    <div className="flex h-5 w-32 items-center border-l border-[#a0a0a0] pl-[5px]">Default</div>
    <div className="h-5 w-[98px] border-l border-[#a0a0a0]" />
    <div className="h-5 w-[71px] border-l border-[#a0a0a0]" />
    <div className="h-5 w-[71px] border-l border-[#a0a0a0]" />
    <div className="h-5 w-[67px] border-l border-[#a0a0a0]" />
    <div className="h-5 w-[71px] border-l border-[#a0a0a0]" />
    <div className="h-5 w-[117px] border-l border-[#a0a0a0]" />
    <div className="flex h-5 w-[121px] items-center gap-2 border-l border-[#a0a0a0] pl-[5px]">
      <svg width="12" height="10" viewBox="0 0 12 10" fill={GREEN} aria-hidden="true"><path d="M0 8h2v2H0zM3 6h2v4H3zM6 3h2v7H6zM9 0h2v10H9z" /></svg>
      199.22 ms
    </div>
  </footer>
);

const App = () => (
  <div className="flex min-h-screen flex-col bg-[#f0f0f0] font-['Open_Sans','Noto_Sans',sans-serif] text-[11px] leading-4 text-black">
    {/* Title bar */}
    <div className="flex h-[23px] items-center bg-[linear-gradient(90deg,#f3f4ef_0%,#e9f4f7_8%,#e9f3fa_42%,#faf0e6_55%,#faf0e6_92%,#f3f1ee_100%)] pl-0.5 pr-[19px]">
      <svg width="16" height="16" viewBox="0 0 16 16" aria-hidden="true">
        <rect width="16" height="16" fill="#33241a" />
        <path d="M3 2c1 3 1 5 4 6 2-1 1-4 3-5M2 6c2 2 3 4 6 4M10 4c2 1 0 4-1 5s-1 4 1 5 3-1 3-2M12 3l1 5M5 4l2 2" fill="none" stroke="#f08a1c" />
      </svg>
      <h1 className="ml-1.5 flex-1">5004510 - GloryGroup-Server: Demo Account - Hedge - Glory Group Limited - EURUSD,H1</h1>
      <div className="flex items-center gap-[34px]">
        <button aria-label="Minimize"><svg width="11" height="11" viewBox="0 0 11 11" stroke="#000"><path d="M1 5.500h9" /></svg></button>
        <button aria-label="Restore"><svg width="11" height="11" viewBox="0 0 11 11" fill="none" stroke="#000"><rect x=".5" y="2.500" width="8" height="8" rx="1.500" /><path d="M3 .5h5.500a2 2 0 0 1 2 2V8" /></svg></button>
        <button aria-label="Close"><svg width="11" height="11" viewBox="0 0 11 11" stroke="#000"><path d="M.5 .5l10 10M10.500 .5l-10 10" /></svg></button>
      </div>
    </div>

    {/* Menu */}
    <nav className="flex h-5 items-center gap-px">
      {MENU.map((item) => (
        <button key={item} className="px-[11px]">{item}</button>
      ))}
    </nav>
    <Toolbar />

    <main className="flex">
      <aside className="mr-1 flex w-[353px] shrink-0 flex-col">
        <MarketWatch />
        <Navigator />
      </aside>

      <div className="min-w-0 flex-1">
        <div className="grid grid-cols-2 pr-px">
          <ChartWindow name="EURUSD,H1" active sell={['1.12', '35', '3']} buy={['1.12', '37', '3']}>
            <Plot
              id="eurusd"
              title="EURUSD, H1:  Euro vs US Dollar"
              grid={[12, 44, 77, 109, 141, 173, 205]}
              prices={['1.14120', '1.13750', '1.13380', '1.13010', '1.12640', '1.12270', '1.11900']}
              price="1.12353"
              priceY={166}
              dates={DATES_H1}
            >
              <path d="M46.500 15v8M50.500 17v6M54.500 17v6M58.500 20v3M62.500 21v2M66.500 14v9M45 22.500h3M49 22.500h3M53 22.500h3M57 22.500h3M61 22.500h3" fill="none" stroke="#00ff00" />
              <Candles data={EURUSD} start={48} step={4} off={29} />
              <Line data={EURUSD_MA} off={29} stroke="#ff0000" />
            </Plot>
          </ChartWindow>

          <ChartWindow name="GBPUSD,H1" sell={['1.32', '34', '3']} buy={['1.32', '37', '3']}>
            <Plot
              id="gbpusd"
              title="GBPUSD, H1:  Great Britain Pound vs US Dollar"
              grid={[27, 60, 92, 125]}
              prices={['1.32630', '1.32410', '1.32190', '1.31970']}
              price="1.32343"
              priceY={69}
              dates={DATES_GBP}
              split
              subTitle="CCI(14) 187.92"
              subLabels={[['311.35', 168, 161], ['100.00', 187, 183], ['0.00', 198, 195], ['-100.00', 210, 206], ['-368.68', 235, 236]]}
              sub={
                <>
                  <path d="M3 183.500H716M3 206.500H716" stroke="#e0e0e0" strokeDasharray="3 3" />
                  <path d="M3 195.500H716" stroke="#778899" strokeDasharray="3 3" />
                  <Line data={CCI} off={29} stroke="#20b2aa" />
                </>
              }
            >
              <path d="M34.500 19v4M58.500 17v6M66.500 15v8M56 21.500h5M64 21.500h5" fill="none" stroke="#00ff00" />
              <Candles data={GBPUSD} start={14} step={8} off={29} />
            </Plot>
          </ChartWindow>

          <ChartWindow name="USDCHF,H1" red sell={['0.83', '15', '9']} buy={['0.83', '18', '9']}>
            <Plot
              id="usdchf"
              title="USDCHF, H1:  US Dollar vs Swiss Franc"
              grid={[13, 45, 77, 109, 141, 173, 205]}
              prices={['0.83820', '0.83590', '0.83360', '0.83130', '0.82900', '0.82670', '0.82440']}
              price="0.83159"
              priceY={105}
              dates={DATES_H1}
            >
              <Bars data={USDCHF} start={1} off={30} />
              <Line data={USDCHF_MA} off={30} stroke="#ff0000" />
            </Plot>
          </ChartWindow>

          <ChartWindow name="USDJPY,H1" sell={['158', '17', '3']} buy={['158', '20', '3']}>
            <Plot
              id="usdjpy"
              title="USDJPY, H1:  US Dollar vs Japanese Yen"
              grid={[29, 61, 93, 125]}
              prices={['158.570', '157.990', '157.410', '156.830']}
              price="158.173"
              priceY={51}
              dates={DATES_H1}
              split
              subTitle="MACD(12,26,9) 0.0634 0.0342"
              subLabels={[['0.3860', 168, 161], ['0.0000', 199, 196], ['-0.4310', 235, 236]]}
              sub={
                <>
                  <path d="M3 196.500H716" stroke="#778899" strokeDasharray="3 3" />
                  <Histogram data={MACD} off={30} />
                  <Line data={MACD_SIGNAL} off={30} stroke="#ff0000" strokeDasharray="3 2" />
                </>
              }
            >
              <Bars data={USDJPY} start={11} off={30} />
            </Plot>
          </ChartWindow>
        </div>

        <div className="mt-px flex h-[25px] justify-between border-t border-black">
          <Tabs items={['EURUSD,H1', 'USDCHF,H1', 'GBPUSD,H1', 'USDJPY,H1']} active="EURUSD,H1" pad="px-[11px]" />
          <div className="flex items-center gap-4 pb-1 pr-3">
            <button aria-label="Scroll tabs left"><svg width="4" height="6" viewBox="0 0 4 6"><path d="M4 0v6L0 3z" fill="#a0a0a0" /></svg></button>
            <button aria-label="Scroll tabs right"><svg width="4" height="6" viewBox="0 0 4 6"><path d="M0 0v6l4-3z" fill="#a0a0a0" /></svg></button>
          </div>
        </div>
      </div>
    </main>

    <Toolbox />
    <StatusBar />
  </div>
);

export default App;
